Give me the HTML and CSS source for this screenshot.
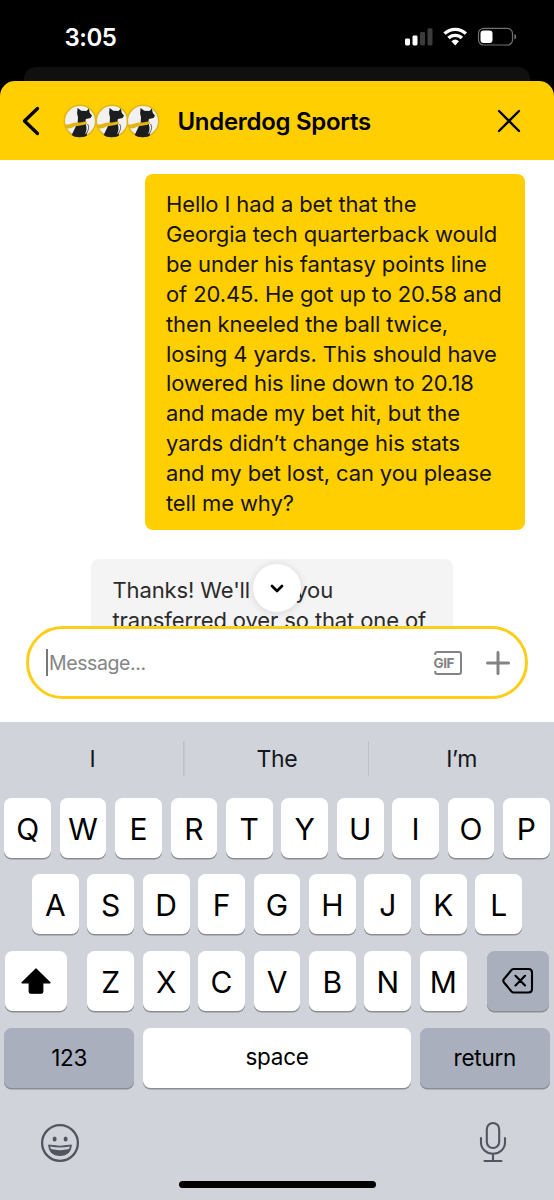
FILE: index.html
```html
<!DOCTYPE html>
<html lang="en">
<head>
<meta charset="utf-8">
<title>Underdog Sports</title>
<link rel="stylesheet" href="styles.css">
</head>
<body>
<svg class="defs" width="0" height="0">
  <symbol id="dog" viewBox="0 0 34 34">
    <circle cx="17" cy="17" r="15.700" fill="#f1f1f1" stroke="#dfb617" stroke-width="1.500"/>
    <path d="M14.600 4l3.600 2.800 5.300.2 2.300-2.600 1 4.600 2.200 2.600-1.400 2.400-4.700.9-.6 3.600 1 3.500.6 9.500-2.200 1.300-5 .5-5-.5-3-1.800 3.200-6.700 2.800-5.800.3-5.500-.9-3.500z" fill="#1d1d1f"/>
    <path d="M1.700 20.300c4.500 1.200 7.300-1.700 12-1.800 3.500 0 6-.2 9.600-1.200l.8 2.300c-3.500 2-7.300 2-10.300 2.400-4 .6-6.500 3.800-11 2.100z" fill="#e3b514"/>
    <path d="M23.300 20c2.300 3 1.200 5.500-.6 9.500" fill="none" stroke="#f1f1f1" stroke-width="1"/>
    <path d="M24.500 20c2 3 1 5.500-.6 9" fill="none" stroke="#1d1d1f" stroke-width=".7"/>
  </symbol>
</svg>
<div class="phone">
  <div class="status">
    <span class="time">3:05</span>
    <svg class="status-icons" width="114" height="22" viewBox="0 0 114 22">
      <rect x="1" y="11.500" width="5" height="7" rx="1.400" fill="#fff"/>
      <rect x="8.500" y="8.500" width="5" height="10" rx="1.400" fill="#fff"/>
      <rect x="16" y="5" width="5" height="13.500" rx="1.400" fill="#3b3b3b"/>
      <rect x="23.500" y="1.200" width="5" height="17.300" rx="1.400" fill="#3b3b3b"/>
      <g fill="none" stroke="#fff" stroke-width="3.300">
        <path d="M40.500 6.700a15.200 15.200 0 0 1 21.400 0"/>
        <path d="M44.500 11a9.600 9.600 0 0 1 13.400 0"/>
      </g>
      <path d="M47.400 14.200a5.800 5.800 0 0 1 7.600 0l-3.800 4.300z" fill="#fff"/>
      <rect x="74.500" y="1.400" width="34" height="16.600" rx="5" fill="none" stroke="#707070" stroke-width="1.200"/>
      <rect x="76.500" y="3.500" width="12" height="12.500" rx="3" fill="#fff"/>
      <path d="M110.300 7v5.500q2-.7 2-2.700t-2-2.800z" fill="#707070"/>
    </svg>
  </div>
  <div class="back-card"></div>
  <header class="header">
    <svg class="back" width="18" height="30" viewBox="0 0 18 30"><path d="M15.500 2.500L2.500 15l13 12.500" fill="none" stroke="#000" stroke-width="3.300" stroke-linecap="round" stroke-linejoin="round"/></svg>
    <div class="avatars">
      <svg class="avatar"><use href="#dog"/></svg>
      <svg class="avatar"><use href="#dog"/></svg>
      <svg class="avatar"><use href="#dog"/></svg>
    </div>
    <h1 class="title">Underdog Sports</h1>
    <svg class="close" width="24" height="24" viewBox="0 0 24 24"><path d="M2 2l20 20M22 2L2 22" stroke="#000" stroke-width="2.300" stroke-linecap="round"/></svg>
  </header>
  <main class="chat">
    <p class="bubble mine">Hello I had a bet that the<br>Georgia tech quarterback would<br>be under his fantasy points line<br>of 20.45. He got up to 20.58 and<br>then kneeled the ball twice,<br>losing 4 yards. This should have<br>lowered his line down to 20.18<br>and made my bet hit, but the<br>yards didn’t change his stats<br>and my bet lost, can you please<br>tell me why?</p>
    <p class="bubble theirs">Thanks! We'll get you<br>transferred over so that one of</p>
    <button class="scroll-down"><svg width="16" height="11" viewBox="0 0 16 11"><path d="M3 3l5 5 5-5" fill="none" stroke="#000" stroke-width="2.700" stroke-linecap="round" stroke-linejoin="round"/></svg></button>
    <div class="composer">
      <span class="caret"></span>
      <span class="placeholder">Message...</span>
      <svg class="gif" width="30" height="26" viewBox="0 0 30 26"><path d="M2.200 5V4q0-2 2-2H26q2 0 2 2v18q0 2-2 2H4.200q-2 0-2-2v-1" fill="none" stroke="#838383" stroke-width="2"/><text x="0.500" y="18" class="gif-text" textLength="21">GIF</text></svg>
      <svg width="26" height="26" viewBox="0 0 26 26"><path d="M13 2.500v21M2.500 13h21" stroke="#838383" stroke-width="3" stroke-linecap="round"/></svg>
    </div>
  </main>
  <section class="keyboard">
    <div class="suggestions"><span>I</span><span>The</span><span>I’m</span></div>
    <div class="row"><b>Q</b><b>W</b><b>E</b><b>R</b><b>T</b><b>Y</b><b>U</b><b>I</b><b>O</b><b>P</b></div>
    <div class="row"><b>A</b><b>S</b><b>D</b><b>F</b><b>G</b><b>H</b><b>J</b><b>K</b><b>L</b></div>
    <div class="row">
      <b class="shift"><svg width="32" height="28" viewBox="0 0 32 28"><path d="M16 2L30 15.800H22.800V24.500q0 1.700-1.700 1.700H10.900q-1.700 0-1.700-1.700V15.800H2z" fill="#000" stroke="#000" stroke-width="1.200" stroke-linejoin="round"/></svg></b>
      <b>Z</b><b>X</b><b>C</b><b>V</b><b>B</b><b>N</b><b>M</b>
      <b class="delete grey"><svg width="32" height="28" viewBox="0 0 32 28"><path d="M11.500 2H26.500q3.500 0 3.500 3.500v16.500q0 3.500-3.500 3.500H11.500q-1 0-2-1L2 15.500q-1.500-1.700 0-3.500L9.500 3q1-1 2-1zM13.500 8.800l9.500 9.700M23 8.800l-9.500 9.700" fill="none" stroke="#000" stroke-width="2.100" stroke-linecap="round" stroke-linejoin="round"/></svg></b>
    </div>
    <div class="row words"><b class="side grey">123</b><b class="space">space</b><b class="side grey">return</b></div>
    <div class="tools">
      <svg width="40" height="40" viewBox="0 0 40 40"><circle cx="20" cy="20" r="17.900" fill="none" stroke="#50555f" stroke-width="2.300"/><ellipse cx="14.600" cy="16" rx="2" ry="2.500" fill="#50555f"/><ellipse cx="25.600" cy="16" rx="2" ry="2.500" fill="#50555f"/><path d="M8.600 22q11.400 2.500 22.800 0q-.6 10.500-11.400 10.500T8.600 22z" fill="#50555f" stroke="#50555f" stroke-width="1" stroke-linejoin="round"/><path d="M10.200 23.500q9.800 2 19.600 0q-.2 1.500-.8 2.600q-9 2.300-18 0q-.7-1.300-.8-2.600z" fill="#d0d3da"/></svg>
      <svg width="28" height="42" viewBox="0 0 28 42"><g fill="none" stroke="#50555f" stroke-width="2.100" stroke-linecap="round"><rect x="7.800" y="2" width="12.400" height="25" rx="6.200"/><path d="M2 17v4.500a12 11.300 0 0 0 24 0V17M14 33v7M5.500 40h17"/></g></svg>
    </div>
    <div class="home"></div>
  </section>
</div>
</body>
</html>
```
FILE: styles.css
```css
* { box-sizing: border-box; }
body { margin: 0; background: #000; font-family: Inter, "Liberation Sans", sans-serif; }
svg { display: block; flex: none; }
.defs { position: absolute; }
.phone { width: 554px; height: 1200px; display: flex; flex-direction: column; overflow: hidden; }
.status { height: 67px; display: flex; justify-content: space-between; padding: 27px 36px 0 64.500px; color: #fff; }
.time { font-size: 24px; line-height: 22px; font-weight: 600; letter-spacing: -0.5px; }
.back-card { height: 14px; margin: 0 24px; background: #101010; border-radius: 12px 12px 0 0; }
.header { height: 79px; flex: none; background: #ffcf02; border-radius: 15px 15px 0 0; display: flex; align-items: center; padding: 1px 33.500px 0 21.500px; }
.avatars { display: flex; margin-left: 23.500px; }
.avatar { width: 34px; height: 34px; margin-right: -2.500px; }
.title { margin: 0 auto 0 20px; font-size: 24px; font-weight: 600; letter-spacing: -0.3px; white-space: nowrap; }
.chat { position: relative; height: 562px; flex: none; background: #fff; padding: 14px 29px 0 91px; overflow: hidden; }
.bubble { margin: 0; border-radius: 8px; font-size: 22px; line-height: 29.850px; white-space: nowrap; letter-spacing: -0.120px; }
.mine { width: 380px; height: 356px; margin-left: 54px; padding: 16.300px 21px; background: #ffcf02; color: #171300; }
.theirs { width: 362px; height: 110px; margin-top: 29px; padding: 17px 21.500px; background: #f4f4f4; color: #2b2b2b; }
.scroll-down { position: absolute; left: 253px; top: 404px; width: 48px; height: 48px; border: 0; padding: 0; border-radius: 50%; background: #fff; box-shadow: 0 1px 8px rgba(0,0,0,.13); display: flex; align-items: center; justify-content: center; }
.composer { position: absolute; left: 26px; right: 26px; top: 466px; height: 73px; border: 3px solid #fccd19; border-radius: 37px; background: #fff; display: flex; align-items: center; padding: 0 14px 0 16.500px; }
.caret { width: 2.500px; height: 27px; background: #777; }
.placeholder { margin: 0 auto 0 1px; font-size: 19.500px; letter-spacing: -0.4px; color: #858585; }
.gif { margin-right: 22.500px; }
.gif-text { font: 700 13.500px Inter, sans-serif; fill: #838383; }
.keyboard { height: 478px; flex: none; background: #d0d3da; padding: 0 4.300px; position: relative; }
.suggestions { height: 75.500px; margin: 0 -4.300px; display: grid; grid-template-columns: repeat(3, 1fr); font-size: 23px; line-height: 75px; text-align: center; color: #15171a; letter-spacing: -0.3px; }
.suggestions span { background: linear-gradient(#bcc0c8, #bcc0c8) 100% 19px / 1.500px 35px no-repeat; }
.suggestions span:last-child { background: none; }
.row { display: flex; justify-content: center; gap: 8.650px; height: 60px; margin-bottom: 16.800px; }
.row b { width: 46.800px; border-radius: 7.500px; background: #fff; box-shadow: 0 1.500px 0 #8b8d92; font-weight: 400; font-size: 30px; line-height: 62px; text-align: center; color: #000; }
.row .grey { background: #a9afbc; }
.row .shift, .row .delete { width: 62.500px; display: flex; align-items: center; justify-content: center; }
.row .shift { margin-right: 11.400px; }
.row .delete { margin-left: 11.400px; }
.row .side { width: 129.700px; }
.row .space { width: 268.700px; }
.words b { font-size: 22.500px; letter-spacing: -0.250px; }
.words b.side { line-height: 60px; }
.words b.space { line-height: 57px; }
.tools { display: flex; justify-content: space-between; padding: 16px 42.700px 0 35.700px; }
.tools svg:first-child { margin-top: 2px; }
.home { position: absolute; left: 179px; bottom: 12px; width: 197px; height: 7px; border-radius: 4px; background: #000; }
```
